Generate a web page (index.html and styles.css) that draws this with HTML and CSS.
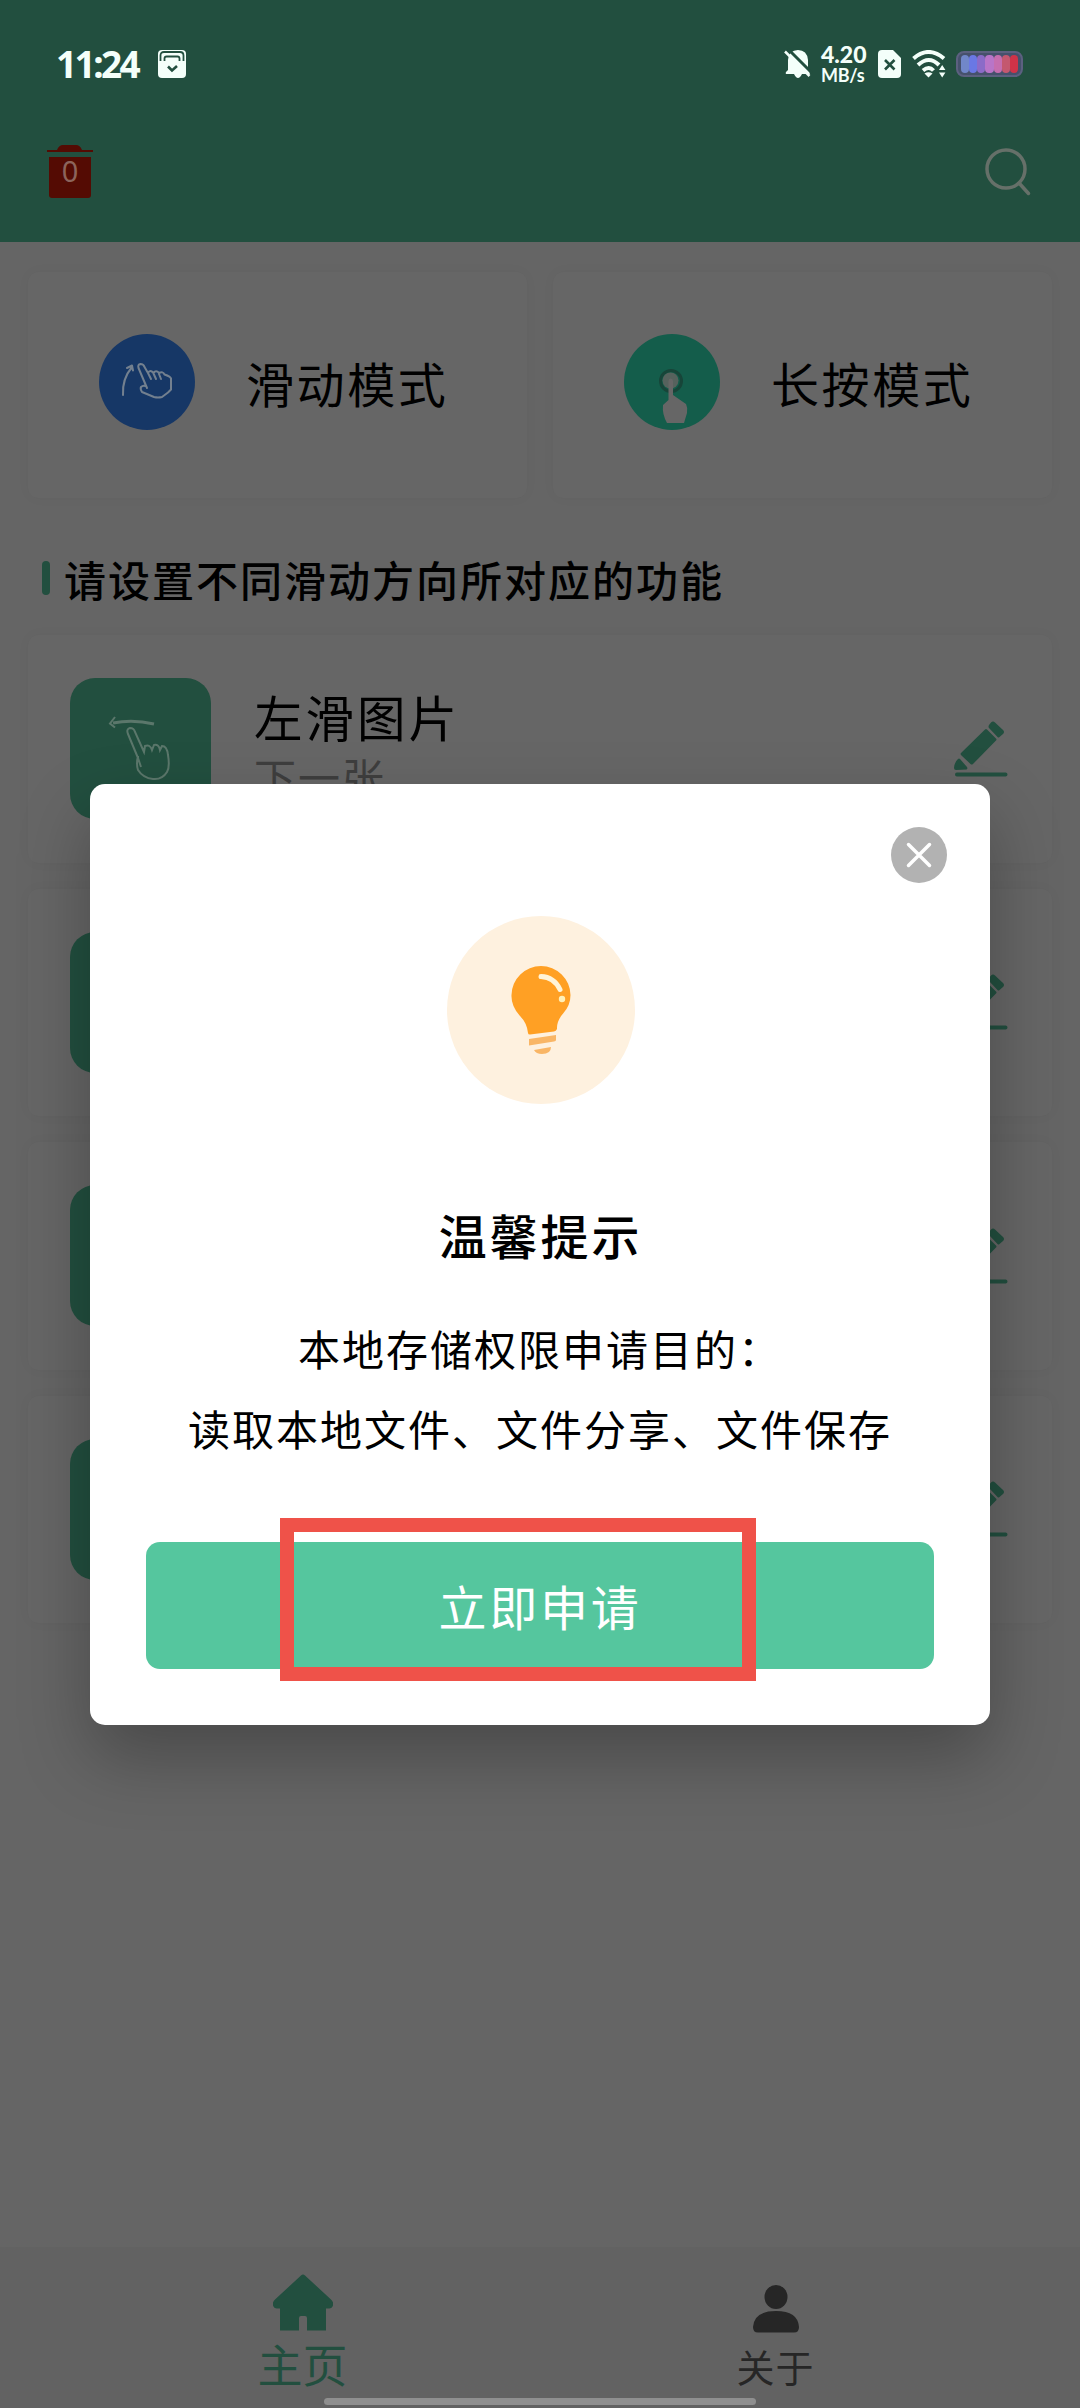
FILE: index.html
```html
<!DOCTYPE html>
<html lang="zh-CN">
<head>
<meta charset="utf-8">
<title>主页</title>
<link rel="stylesheet" href="styles.css">
</head>
<body>
<svg class="defs" width="0" height="0">
  <symbol id="pen" viewBox="0 0 54 56">
    <path d="M7 32 31 8.500q1-1 2 0l9 9q1 1 0 2L19 43q-1.500 1-2.500 0l-9-8.500q-1.500-1.500-.5-2.500zM35 4l2-2.500q2-2 4 0L49 9q2 2 0 4l-3.500 3q-1 1-2 0l-8.500-9q-1-1 0-3zM4 38q1-1 2 0l7 8q1 2-.5 2.500L2 49q-2 0-2-2 .5-6 4-9zM3 51.500h48.500a2 2 0 0 1 0 4H3a2 2 0 0 1 0-4z"/>
  </symbol>
  <symbol id="swipe-hand" viewBox="0 0 66 66">
    <path class="sweep" d="M46 8Q25 3 5 7"/><path d="M7 1 2 7.500l5 4"/><path d="M30 42 20 18q-2-5 2-6 4 0 5 4l9 20 1-6q5-2 7 4l2-5q5-1 6 5l2-4q5 0 6 9 2 12-1 17-5 8-14 7-10-1-15-9-2-6 0-14zl3 9"/>
  </symbol>
</svg>
<div class="app">
  <header class="topbar">
    <div class="status">
      <span class="clock">11:24</span>
      <svg class="st-cal" viewBox="0 0 28 28"><rect width="28" height="28" rx="4"/><path class="cut" d="M2.500 11V5.500q0-3.500 3.500-3.500h16q3.500 0 3.500 3.500V11M6.500 11V8.500q0-2 2-2h11q2 0 2 2V11"/><path class="cut tick" d="m10 16.500 4 4 5-4.500"/></svg>
      <span class="spacer"></span>
      <svg class="st-bell" viewBox="0 0 26 28"><path d="M3 20V10Q4 0 13 0t10 10v10l2 3q0 1-1 1h-7q-4 8-8 0H2q-2 0-1-2z"/><path class="slash-gap" d="M3-1 27 23"/><path class="slash" d="M0 1.500 24.500 26"/></svg>
      <span class="speed"><b>4.20</b><b>MB/s</b></span>
      <svg class="st-sim" viewBox="0 0 23 28"><path d="M4 0h11l8 8v16q0 4-4 4H4q-4 0-4-4V4q0-4 4-4z"/><path class="cut tick" d="m7 10 9.500 9.500M16.500 10 7 19.500"/></svg>
      <svg class="st-wifi" viewBox="0 0 34 28"><path class="arc" d="M1.500 8.500q15-13 30.500 0M6 15q11-10 21 0M11 20.500q6-5 10.500 0"/><path d="M12.500 23.500q4-2.500 8 0l-4 4zM27 20l3.200-5 3.200 5zM27 22.500l3.200 5 3.200-5z"/></svg>
      <span class="battery"><i></i><i></i><i></i><i></i><i></i><i></i><i></i></span>
    </div>
    <div class="tools">
      <div class="trash">
        <svg viewBox="0 0 46 54"><path d="M0 5h10q2-5 6-5h13q4 0 6 5h11v2H0zM2 12h42v38q0 3-3 3H5q-3 0-3-3z"/></svg>
        <span>0</span>
      </div>
      <svg class="search" viewBox="0 0 46 48"><circle cx="21" cy="21" r="19"/><path d="m34 35 9.500 10.500"/></svg>
    </div>
  </header>

  <main>
    <section class="modes">
      <div class="mode">
        <span class="disc blue"><svg viewBox="0 0 96 96"><path d="M24 61Q23 45 33 33M28 34l5-2.500 1 5"/><path d="M48 54 39.500 34q-1-3.500 2-4 3 0 4 3l3.500 6q2-4 5.500 0 2.500-3.500 5.500 0 4-2 5.500 1.500 6 2 6.500 4v11q-1 1-3 3l-6 4.500q-4 1-8 0L43 58q-2-3-1-5 2-2 4.500-1M49 39l3 6M54.500 39.500l2.500 5.500M60 40l2 5"/></svg></span>
        <span>滑动模式</span>
      </div>
      <div class="mode">
        <span class="disc teal"><svg viewBox="0 0 96 96"><circle class="ring" cx="47" cy="47" r="10.500"/><circle class="dot" cx="46.500" cy="46.500" r="8"/><path d="M44.500 47q0-2.500 2.200-2.500T49 47v14l13 9q2 4 1 9l-3 10H43q-5-9-4-18l5.500-5z"/></svg></span>
        <span>长按模式</span>
      </div>
    </section>
    <h2>请设置不同滑动方向所对应的功能</h2>
    <section class="list">
      <div class="row"><span class="tile"><svg><use href="#swipe-hand"/></svg></span><div class="label"><b>左滑图片</b><small>下一张</small></div><svg class="pen"><use href="#pen"/></svg></div>
      <div class="row"><span class="tile"></span><svg class="pen"><use href="#pen"/></svg></div>
      <div class="row"><span class="tile"></span><svg class="pen"><use href="#pen"/></svg></div>
      <div class="row"><span class="tile"></span><svg class="pen"><use href="#pen"/></svg></div>
    </section>
  </main>

  <nav class="tabs">
    <div class="tab home"><svg viewBox="0 0 60 57"><path d="M28 1.500q2-2 4 0l26 24q3 3 2 6-1 3-4 3h-3v22H34V44q0-2-2-2h-4q-2 0-2 2v12.500H7v-22H4q-3 0-4-3-1-3 2-6z"/></svg><span>主页</span></div>
    <div class="tab about"><svg viewBox="0 0 46 48"><ellipse cx="23" cy="12" rx="11.500" ry="12"/><path d="M0 42Q1 26 23 26t23 16q0 5.500-5 5.500H5q-5 0-5-5.500z"/></svg><span>关于</span></div>
  </nav>
</div>

<div class="mask">
  <div class="dialog">
    <svg class="close" viewBox="0 0 56 56"><circle cx="28" cy="28" r="28"/><path d="m17.500 17.500 21 21M38.500 17.500l-21 21"/></svg>
    <svg class="bulb" viewBox="0 0 188 188"><circle class="halo" cx="94" cy="94" r="94"/><path class="glass" d="M81 117Q80 107 73 100 64 90 64.500 79A29.500 29.500 0 0 1 94 50a29.500 29.500 0 0 1 29.500 29q0 10-7 18-7 8-6.500 16-1 2-3 2.500l-24 3q-2 0-2-1.500z"/><path class="base" d="m82 123 27-4v5q0 1-2 1.500l-25 4zM87 134l17-3q0 7-9 7-6 0-8-4z"/><path class="shine" d="M94 60.500q13 .5 19 13"/><circle class="spark" cx="115" cy="83" r="3.200"/></svg>
    <h1>温馨提示</h1>
    <p>本地存储权限申请目的：<br>读取本地文件、文件分享、文件保存</p>
    <div class="apply">立即申请<span class="marker"></span></div>
  </div>
</div>
<div class="home-bar"></div>
</body>
</html>
```
FILE: styles.css
```css
* { box-sizing: border-box; }
body {
  margin: 0;
  position: relative;
  width: 1080px;
  height: 2408px;
  overflow: hidden;
  font-family: "Noto Sans CJK SC", sans-serif;
  color: #000;
}
.defs { display: block; position: absolute; }
svg { display: block; flex: none; }

.app {
  height: 2408px;
  display: flex;
  flex-direction: column;
  background: #656565;
}

/* top bar */
.topbar { height: 242px; background: #224f3f; }
.status {
  height: 128px;
  padding: 0 57px 0 56px;
  display: flex;
  align-items: center;
  color: #f4fffa;
  fill: #f4fffa;
}
.clock { font: 700 37px/1 "Noto Sans", sans-serif; width: 102px; letter-spacing: -2.600px; padding-bottom: 2px; }
.spacer { flex: 1; }
.st-cal { width: 28px; height: 28px; }
.cut { fill: none; stroke: #224f3f; stroke-width: 1.800; }
.tick { stroke-width: 2.600; }
.st-bell { width: 26px; height: 28px; margin-right: 10px; overflow: visible; }
.slash-gap { stroke: #224f3f; stroke-width: 3; }
.slash { stroke: #f4fffa; stroke-width: 2.500; }
.speed { width: 57px; display: flex; flex-direction: column; font-family: Lato, sans-serif; }
.speed b { font-size: 23px; line-height: 22px; font-weight: 900; }
.speed b + b { font-size: 18px; line-height: 20px; font-weight: 700; letter-spacing: -.3px; }
.st-sim { width: 23px; height: 28px; margin-right: 11px; }
.st-wifi { width: 34px; height: 28px; margin-right: 10px; }
.arc { fill: none; stroke: #f4fffa; stroke-width: 4; }
.battery {
  width: 67px;
  height: 26px;
  padding: 2px 3px;
  border: 2px solid #5c6080;
  border-radius: 8px;
  background: #46516c;
  display: flex;
}
.battery i { flex: 1; border-radius: 4px; }
.battery i:nth-child(1) { background: #7187c9; }
.battery i:nth-child(2) { background: #6a78e4; }
.battery i:nth-child(3) { background: #8b6bc8; }
.battery i:nth-child(4) { background: #b875c8; }
.battery i:nth-child(5) { background: #c56eaf; }
.battery i:nth-child(6) { background: #c4586f; }
.battery i:nth-child(7) { background: #cf3348; }

.tools {
  padding: 17px 49px 0 47px;
  display: flex;
  justify-content: space-between;
  align-items: flex-start;
}
.trash { width: 46px; height: 54px; display: grid; fill: #540b03; }
.trash > * { grid-area: 1 / 1; }
.trash span {
  font: 29px/32px "Noto Sans", sans-serif;
  text-align: center;
  padding-top: 10px;
  color: #8c645c;
}
.search { width: 46px; height: 48px; margin-top: 3px; fill: none; stroke: #667069; stroke-width: 3.500; stroke-linecap: round; }

/* content */
main { flex: 1; padding: 30px 28px 0; }
.modes { display: grid; grid-template-columns: 1fr 1fr; gap: 26px; }
.mode {
  height: 226px;
  padding-left: 71px;
  border-radius: 10px;
  background: #666;
  box-shadow: 0 0 14px rgba(0, 0, 0, .03);
  display: flex;
  align-items: center;
  gap: 51px;
  font-size: 48px;
  line-height: 72px;
  letter-spacing: 2.600px;
  padding-bottom: 6px;
}
.disc { width: 96px; height: 96px; border-radius: 50%; }
.disc svg { width: 96px; height: 96px; stroke-linejoin: round; stroke-linecap: round; }
.blue { background: #163766; }
.blue path { fill: none; stroke: #73808f; stroke-width: 2; }
.teal { background: #145d4b; }
.teal path { fill: #666; }
.ring { fill: none; stroke: #174539; stroke-width: 3; }
.dot { fill: #56625d; }

h2 {
  margin: 47px 0 0 14px;
  height: 68px;
  font-size: 42px;
  line-height: 68px;
  font-weight: 500;
  letter-spacing: 2px;
  display: flex;
  align-items: center;
  gap: 14px;
}
h2::before { content: ""; width: 8px; height: 34px; border-radius: 4px; background: #224f3f; margin-top: -3px; }

.list { padding-top: 22px; display: grid; gap: 26px; }
.row {
  height: 227.500px;
  padding: 0 44px 0 42px;
  border-radius: 10px;
  background: #666;
  box-shadow: 0 0 14px rgba(0, 0, 0, .03);
  display: flex;
  align-items: center;
}
.tile { width: 141px; height: 141px; border-radius: 25px; background: #224f3f; padding: 38px 0 0 38px; }
.tile svg { width: 66px; height: 66px; fill: none; stroke: #5b776b; stroke-width: 2; }
.sweep { stroke-width: 3; }
.label { margin-left: 43px; display: flex; flex-direction: column; margin-top: -7px; }
.label b { font-size: 48.500px; line-height: 62px; font-weight: 400; letter-spacing: 3px; }
.label small { font-size: 42px; line-height: 58px; letter-spacing: 2px; color: #3e3e3e; }
.pen { width: 54px; height: 56px; margin-left: auto; fill: #224f3f; }

/* bottom tabs */
.tabs { height: 161px; background: #626262; display: grid; grid-template-columns: 605px 341px; color: #262626; fill: #262626; }
.tab { display: flex; flex-direction: column; align-items: center; }
.home { padding-top: 27px; color: #224f3f; fill: #224f3f; }
.home svg { width: 60px; height: 57px; }
.home span { font-size: 45px; line-height: 66px; }
.about { padding-top: 38px; }
.about svg { width: 46px; height: 48px; }
.about span { font-size: 38px; line-height: 66px; letter-spacing: 1px; }

/* dialog over the page */
.mask { position: absolute; inset: 0; padding: 784px 90px 0; }
.dialog {
  height: 941px;
  padding: 43px 43px 56px 56px;
  border-radius: 15px;
  background: #fff;
  box-shadow: 0 32px 70px rgba(0, 0, 0, .28);
  display: flex;
  flex-direction: column;
}
.close { width: 56px; height: 56px; align-self: flex-end; fill: #b2b2b2; }
.close path { stroke: #fff; stroke-width: 3.500; stroke-linecap: round; }
.bulb { width: 188px; height: 188px; margin: 33px 0 0 301px; }
.halo { fill: #fef1df; }
.glass { fill: #ffa024; }
.base { fill: #f9b666; }
.shine { fill: none; stroke: #fff4d8; stroke-width: 5; stroke-linecap: round; }
.spark { fill: #fff0b8; }
h1 { margin: 94px 12px 0 0; text-align: center; font-size: 48px; line-height: 72px; font-weight: 500; letter-spacing: 2.900px; }
p { margin: 38px 13px 0 0; text-align: center; font-size: 42px; line-height: 80px; letter-spacing: 2px; }
.apply {
  position: relative;
  width: 788px;
  height: 127px;
  margin-top: auto;
  border-radius: 14px;
  background: #55c69e;
  color: #fff;
  font-size: 48px;
  line-height: 126px;
  letter-spacing: 2.800px;
  text-align: center;
}
.marker { position: absolute; left: 134px; top: -24px; width: 476px; height: 163px; border: 14px solid #ef5249; }
.home-bar { position: absolute; left: 324px; top: 2398px; width: 432px; height: 7px; border-radius: 4px; background: #8f8f8f; }
```
